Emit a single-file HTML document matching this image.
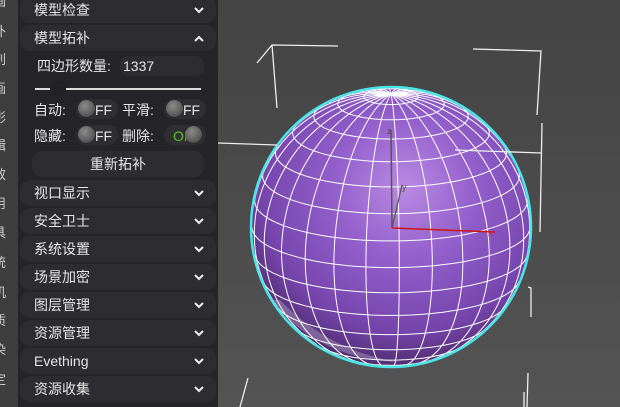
<!DOCTYPE html>
<html><head><meta charset="utf-8"><style>
*{margin:0;padding:0;box-sizing:border-box}
body{width:620px;height:407px;overflow:hidden;background:#4d4d4d;font-family:"Liberation Sans","Noto Sans CJK SC",sans-serif;position:relative}
#strip{position:absolute;left:0;top:0;width:18px;height:407px;background:#3e3e3e;overflow:hidden}
#strip span{position:absolute;left:-7px;color:#cfcfcf;font-size:13px;line-height:14px}
#panel{position:absolute;left:18px;top:0;width:200px;height:407px;background:#252529}
.row{position:absolute;left:2px;width:196px;height:26px;background:#2c2c31;border-radius:10px;color:#e6e6e6;font-size:14px;line-height:26px;padding-left:14px}
.row svg{position:absolute;right:12px;top:10px}
.t{position:absolute;color:#e6e6e6;font-size:14px;line-height:18px}
.pill{position:absolute;width:42px;height:20px;border-radius:10px;background:#2e2e33}
.knob{position:absolute;width:17px;height:17px;border-radius:50%;background:radial-gradient(circle at 40% 35%,#8a8a8a,#555 70%,#3a3a3a);box-shadow:0 0 1px #111}
#vp{position:absolute;left:218px;top:0;width:402px;height:407px;background:linear-gradient(#444 0%,#4b4b4b 50%,#545454 100%)}
</style></head><body>
<div id="vp"><svg width="402" height="407" viewBox="218 0 402 407" style="position:absolute;left:0;top:0">
<defs>
<radialGradient id="g" cx="0.55" cy="0.36" r="0.72">
<stop offset="0" stop-color="#b98ae2"/><stop offset="0.35" stop-color="#9360cc"/><stop offset="0.72" stop-color="#7544ab"/><stop offset="0.92" stop-color="#4a2a66"/><stop offset="1" stop-color="#2e1b3c"/></radialGradient>
<clipPath id="c"><circle cx="391" cy="227" r="139"/></clipPath>
</defs>
<circle cx="391" cy="227" r="139" fill="url(#g)"/>
<path d="M270 300 Q320 360 400 362 Q330 352 280 300Z" fill="#bbb0c8" opacity="0.4" clip-path="url(#c)"/>
<g id="wire" clip-path="url(#c)" stroke="#fff" stroke-width="1" fill="none"></g>
<circle cx="391" cy="227" r="140" fill="none" stroke="#48e6e6" stroke-width="2.5"/>
<g stroke="#eee" stroke-width="1.3" fill="none">
<path d="M257 63 L272 45 L338 46 M272 45 L277 108"/>
<path d="M473 49 L541 51 L537 115"/>
<path d="M455 150 L542 153 M542 123 L540 232"/>
<path d="M218 143 L277 145"/>
<path d="M528 373 L527 407 M524 392 L524 407"/>
<path d="M248 378 L240 407"/>
<path d="M528 287 L531 288 L531 317"/>
</g>
<path d="M391 130 L392 228" stroke="#555" stroke-width="1.5"/>
<path d="M392 228 L402 185" stroke="#555" stroke-width="1.2"/>
<path d="M392 228 L495 232" stroke="#d01515" stroke-width="1.5"/>
<text x="488" y="236" fill="#c03030" font-size="9">x</text>
<text x="402" y="190" fill="#555" font-size="9">y</text>
<text x="387" y="134" fill="#444" font-size="8">z</text>
</svg></div>
<div id="strip">
<span style="top:-5px">画</span><span style="top:25px">补</span><span style="top:53px">刺</span><span style="top:82px">画</span><span style="top:111px">影</span><span style="top:139px">辑</span><span style="top:168px">效</span><span style="top:197px">用</span><span style="top:226px">具</span><span style="top:256px">统</span><span style="top:286px">机</span><span style="top:314px">质</span><span style="top:343px">染</span><span style="top:373px">定</span>
</div>
<div id="panel">
<div class="row" style="top:-3px">模型检查<svg width="10" height="7"><path d="M1 1 L5 5 L9 1" stroke="#eee" stroke-width="2" fill="none"/></svg></div>
<div class="row" style="top:25px">模型拓补<svg width="10" height="7"><path d="M1 6 L5 2 L9 6" stroke="#eee" stroke-width="2" fill="none"/></svg></div>
<div class="t" style="left:19px;top:57px">四边形数量:</div>
<div style="position:absolute;left:102px;top:56px;width:84px;height:20px;background:#2c2c31;border-radius:8px"></div>
<div class="t" style="left:105px;top:57px">1337</div>
<div style="position:absolute;left:17px;top:88px;width:15px;height:2px;background:#ddd"></div>
<div style="position:absolute;left:33px;top:81px;width:16px;height:16px;border-radius:50%;background:#222226"></div>
<div style="position:absolute;left:48px;top:88px;width:135px;height:2px;background:#ddd"></div>
<div class="t" style="left:16px;top:101px">自动:</div>
<div class="pill" style="left:58px;top:99px"></div><div class="knob" style="left:60px;top:100px"></div><div class="t" style="left:77px;top:101px">FF</div>
<div class="t" style="left:104px;top:101px">平滑:</div>
<div class="pill" style="left:146px;top:99px"></div><div class="knob" style="left:148px;top:100px"></div><div class="t" style="left:165px;top:101px">FF</div>
<div class="t" style="left:16px;top:127px">隐藏:</div>
<div class="pill" style="left:58px;top:125px"></div><div class="knob" style="left:60px;top:126px"></div><div class="t" style="left:77px;top:127px">FF</div>
<div class="t" style="left:104px;top:127px">删除:</div>
<div class="pill" style="left:146px;top:125px"></div><div class="t" style="left:155px;top:127px;color:#5ac81e">ON</div><div class="knob" style="left:167px;top:126px"></div>
<div class="row" style="top:151px;left:14px;width:172px;text-align:center;padding:0">重新拓补</div>
<div class="row" style="top:180px">视口显示<svg width="10" height="7"><path d="M1 1 L5 5 L9 1" stroke="#eee" stroke-width="2" fill="none"/></svg></div>
<div class="row" style="top:208px">安全卫士<svg width="10" height="7"><path d="M1 1 L5 5 L9 1" stroke="#eee" stroke-width="2" fill="none"/></svg></div>
<div class="row" style="top:236px">系统设置<svg width="10" height="7"><path d="M1 1 L5 5 L9 1" stroke="#eee" stroke-width="2" fill="none"/></svg></div>
<div class="row" style="top:264px">场景加密<svg width="10" height="7"><path d="M1 1 L5 5 L9 1" stroke="#eee" stroke-width="2" fill="none"/></svg></div>
<div class="row" style="top:292px">图层管理<svg width="10" height="7"><path d="M1 1 L5 5 L9 1" stroke="#eee" stroke-width="2" fill="none"/></svg></div>
<div class="row" style="top:320px">资源管理<svg width="10" height="7"><path d="M1 1 L5 5 L9 1" stroke="#eee" stroke-width="2" fill="none"/></svg></div>
<div class="row" style="top:348px">Evething<svg width="10" height="7"><path d="M1 1 L5 5 L9 1" stroke="#eee" stroke-width="2" fill="none"/></svg></div>
<div class="row" style="top:376px">资源收集<svg width="10" height="7"><path d="M1 1 L5 5 L9 1" stroke="#eee" stroke-width="2" fill="none"/></svg></div>
</div>
<script>
(function(){
var cx=391,cy=227,r=139,t=17*Math.PI/180,ct=Math.cos(t),st=Math.sin(t);
function P(phi,lam){var x=Math.cos(phi)*Math.sin(lam),y=Math.sin(phi),z=Math.cos(phi)*Math.cos(lam);
var y2=y*ct-z*st,z2=y*st+z*ct;return [cx+r*x,cy-r*y2,z2];}
var d="";
function line(f,n){var pen=false;for(var i=0;i<=n;i++){var p=f(i/n);if(p[2]>-0.02){d+=(pen?"L":"M")+p[0].toFixed(1)+" "+p[1].toFixed(1);pen=true;}else pen=false;}}
for(var k=1;k<16;k++){var phi=-Math.PI/2+k*Math.PI/16;line(function(u){return P(phi,u*2*Math.PI)},120);}
for(var m=0;m<26;m++){var lam=m*2*Math.PI/26+0.06;line(function(u){return P(-Math.PI/2+u*Math.PI,lam)},80);}
var p=document.createElementNS("http://www.w3.org/2000/svg","path");p.setAttribute("d",d);
document.getElementById("wire").appendChild(p);
})();
</script>
</body></html>
